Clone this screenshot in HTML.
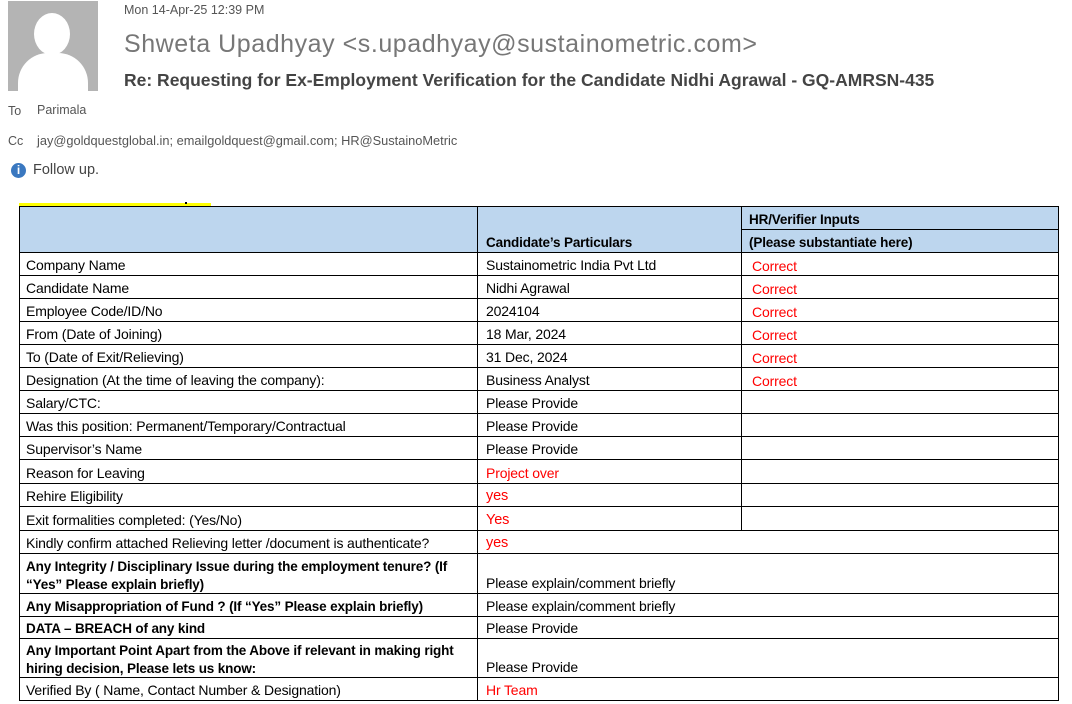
<!DOCTYPE html>
<html><head><meta charset="utf-8"><style>
body{margin:0;width:1072px;height:704px;background:#fff;position:relative;overflow:hidden;font-family:"Liberation Sans",sans-serif;}
.a{position:absolute;white-space:nowrap;}
.hl{position:absolute;height:1px;background:#000;}
.vl{position:absolute;width:1px;background:#000;}
.c{position:absolute;font-size:14px;color:#000;white-space:nowrap;line-height:15px;letter-spacing:-0.15px;}
.b{font-weight:bold;font-size:13.5px;letter-spacing:-0.15px;}
.r{color:#f00;}
</style></head><body>
<div class="a" style="left:8px;top:1px;width:90px;height:90px;background:#b4b4b4;overflow:hidden">
<div style="position:absolute;left:26px;top:12px;width:36px;height:42px;border-radius:50%;background:#fff"></div>
<div style="position:absolute;left:10px;top:52px;width:70px;height:50px;border-radius:30px 30px 0 0;background:#fff"></div>
</div>
<div class="a" style="left:124px;top:3px;font-size:12.5px;color:#555">Mon 14-Apr-25 12:39 PM</div>
<div class="a" style="left:124px;top:30px;font-size:25px;color:#777;letter-spacing:0.55px">Shweta Upadhyay &lt;s.upadhyay@sustainometric.com&gt;</div>
<div class="a" style="left:124px;top:70px;font-size:17.5px;color:#444;font-weight:bold;letter-spacing:0px">Re: Requesting for Ex-Employment Verification for the Candidate Nidhi Agrawal - GQ-AMRSN-435</div>
<div class="a" style="left:8px;top:104px;font-size:12.5px;color:#555">To</div>
<div class="a" style="left:37px;top:103px;font-size:12.5px;color:#555">Parimala</div>
<div class="a" style="left:8px;top:134px;font-size:12.5px;color:#555">Cc</div>
<div class="a" style="left:37px;top:133px;font-size:12.8px;color:#555">jay@goldquestglobal.in; emailgoldquest@gmail.com; HR@SustainoMetric</div>
<div class="a" style="left:11px;top:163px;width:15px;height:15px;border-radius:50%;background:#3a78c0;color:#fff;font-size:12px;font-weight:bold;text-align:center;line-height:15px">i</div>
<div class="a" style="left:33px;top:162px;font-size:14.5px;color:#444">Follow up.</div>
<div class="a" style="left:19px;top:203px;width:192px;height:3px;background:#ff0"></div>
<div class="a" style="left:185px;top:202px;width:2px;height:2px;background:#000"></div>
<div class="a" style="left:19px;top:206px;width:1039px;height:46px;background:#bdd6ee"></div>
<div class="c b" style="left:486px;top:235px">Candidate’s Particulars</div>
<div class="c b" style="left:749px;top:212px">HR/Verifier Inputs</div>
<div class="c b" style="left:749px;top:235px">(Please substantiate here)</div>
<div class="hl" style="left:741px;top:229px;width:317px"></div>
<div id="t"></div>
<script>
const L=[["Company Name","Sustainometric India Pvt Ltd","Correct"],["Candidate Name","Nidhi Agrawal","Correct"],["Employee Code/ID/No","2024104","Correct"],["From (Date of Joining)","18 Mar, 2024","Correct"],["To (Date of Exit/Relieving)","31 Dec, 2024","Correct"],["Designation (At the time of leaving the company):","Business Analyst","Correct"],["Salary/CTC:","Please Provide",""],["Was this position: Permanent/Temporary/Contractual","Please Provide",""],["Supervisor’s Name","Please Provide",""],["Reason for Leaving","!Project over",""],["Rehire Eligibility","!yes",""],["Exit formalities completed: (Yes/No)","!Yes",""],["Kindly confirm attached Relieving letter /document is authenticate?","!yes",null],["*Any Integrity / Disciplinary Issue during the employment tenure? (If<br>“Yes” Please explain briefly)","Please explain/comment briefly",null],["*Any Misappropriation of Fund ? (If “Yes” Please explain briefly)","Please explain/comment briefly",null],["*DATA – BREACH of any kind","Please Provide",null],["*Any Important Point Apart from the Above if relevant in making right<br>hiring decision, Please lets us know:","Please Provide",null],["Verified By ( Name, Contact Number &amp; Designation)","!Hr Team",null]];
const Y=[252,275,298,321,344,367,390,413,436,459,483,506,530,553,593,616,638,677,700];
let h='';
h+=`<div class="hl" style="left:19px;top:206px;width:1040px"></div>`;
for(let i=0;i<Y.length;i++)h+=`<div class="hl" style="left:19px;top:${Y[i]}px;width:1040px"></div>`;
h+=`<div class="vl" style="left:19px;top:206px;height:495px"></div><div class="vl" style="left:1058px;top:206px;height:495px"></div><div class="vl" style="left:477px;top:206px;height:495px"></div><div class="vl" style="left:741px;top:206px;height:324px"></div>`;
L.forEach((r,i)=>{const bot=Y[i+1]-1;let a=r[0],bc='';if(a[0]=='*'){a=a.slice(1);bc=' b';}
const two=a.includes('<br>');
h+=`<div class="c${bc}" style="left:26px;top:${bot-(two?34:16)}px;line-height:${two?'18px':'15px'}">${a}</div>`;
let v=r[1],rc='';if(v[0]=='!'){v=v.slice(1);rc=' r';}
h+=`<div class="c${rc}" style="left:486px;top:${bot-16}px;${rc&&i>=10&&i<=12?'font-size:14.5px;':''}">${v}</div>`;
if(r[2])h+=`<div class="c r" style="left:752px;top:${bot-15}px">${r[2]}</div>`;});
document.getElementById('t').innerHTML=h;
</script>
</body></html>
